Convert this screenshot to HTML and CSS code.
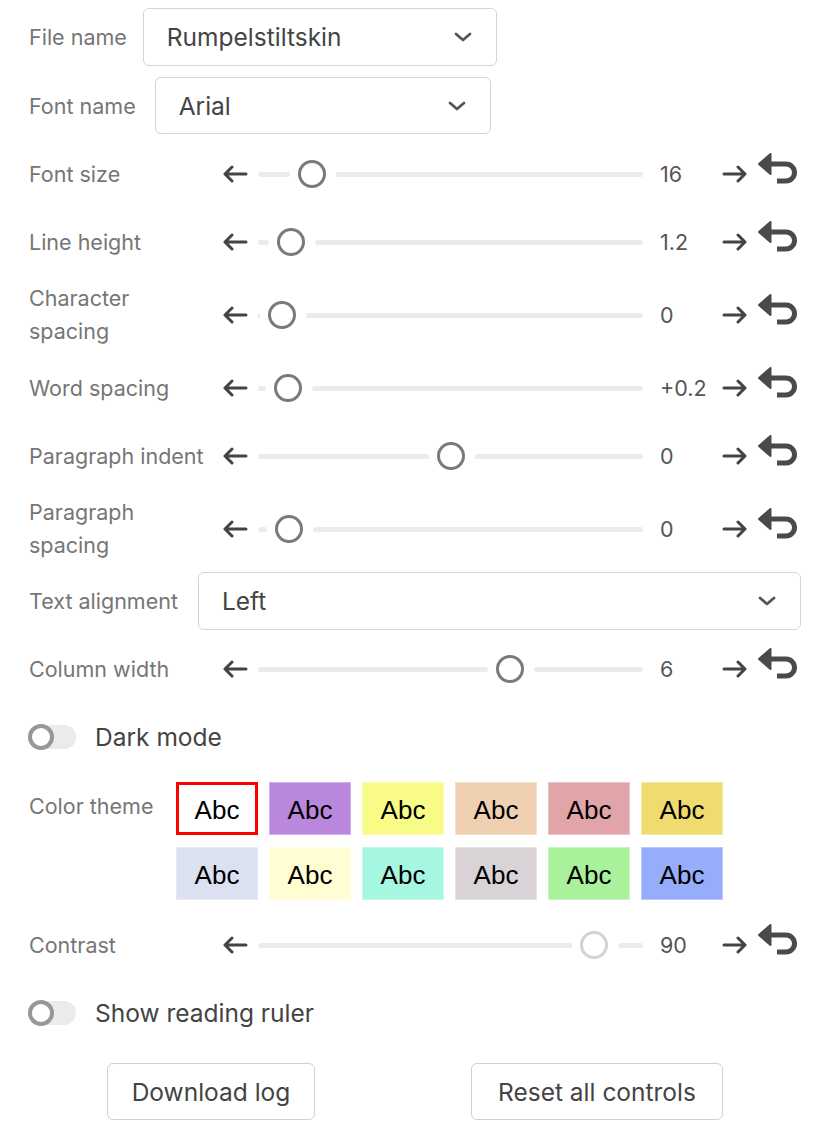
FILE: index.html
```html
<!DOCTYPE html>
<html lang="en">
<head>
<meta charset="utf-8">
<title>Reading settings</title>
<link rel="stylesheet" href="styles.css">
</head>
<body>
<div class="panel">

  <div class="row select-row first">
    <span class="label">File name</span>
    <div class="select select-file"><span class="select-text">Rumpelstiltskin</span>
      <svg class="chev" viewBox="0 0 18 10" width="18" height="10"><path d="M2 2 L9 8 L16 2"/></svg></div>
  </div>

  <div class="row select-row">
    <span class="label">Font name</span>
    <div class="select select-font"><span class="select-text">Arial</span>
      <svg class="chev" viewBox="0 0 18 10" width="18" height="10"><path d="M2 2 L9 8 L16 2"/></svg></div>
  </div>

  <div class="row slider-row">
    <span class="label slabel">Font size</span>
    <svg class="arrow" viewBox="0 0 26 18" width="26" height="18"><path d="M24 9 H3 M10 2 L3 9 L10 16"/></svg>
    <div class="track"><span class="seg" style="width:32px"></span><span class="thumb"></span><span class="seg rest"></span></div>
    <span class="value">16</span>
    <svg class="arrow" viewBox="0 0 26 18" width="26" height="18"><path d="M2 9 H23 M16 2 L23 9 L16 16"/></svg>
    <svg class="reset" viewBox="0 0 40 31" width="40" height="31"><polygon points="1,11 12.5,1 12.5,21"/><path d="M11 11 H28 A8.5 8.5 0 0 1 28 28 H19"/></svg>
  </div>

  <div class="row slider-row">
    <span class="label slabel">Line height</span>
    <svg class="arrow" viewBox="0 0 26 18" width="26" height="18"><path d="M24 9 H3 M10 2 L3 9 L10 16"/></svg>
    <div class="track"><span class="seg" style="width:11px"></span><span class="thumb"></span><span class="seg rest"></span></div>
    <span class="value">1.2</span>
    <svg class="arrow" viewBox="0 0 26 18" width="26" height="18"><path d="M2 9 H23 M16 2 L23 9 L16 16"/></svg>
    <svg class="reset" viewBox="0 0 40 31" width="40" height="31"><polygon points="1,11 12.5,1 12.5,21"/><path d="M11 11 H28 A8.5 8.5 0 0 1 28 28 H19"/></svg>
  </div>

  <div class="row slider-row">
    <span class="label slabel two">Character<br>spacing</span>
    <svg class="arrow" viewBox="0 0 26 18" width="26" height="18"><path d="M24 9 H3 M10 2 L3 9 L10 16"/></svg>
    <div class="track"><span class="seg" style="width:2px"></span><span class="thumb"></span><span class="seg rest"></span></div>
    <span class="value">0</span>
    <svg class="arrow" viewBox="0 0 26 18" width="26" height="18"><path d="M2 9 H23 M16 2 L23 9 L16 16"/></svg>
    <svg class="reset" viewBox="0 0 40 31" width="40" height="31"><polygon points="1,11 12.5,1 12.5,21"/><path d="M11 11 H28 A8.5 8.5 0 0 1 28 28 H19"/></svg>
  </div>

  <div class="row slider-row">
    <span class="label slabel">Word spacing</span>
    <svg class="arrow" viewBox="0 0 26 18" width="26" height="18"><path d="M24 9 H3 M10 2 L3 9 L10 16"/></svg>
    <div class="track"><span class="seg" style="width:8px"></span><span class="thumb"></span><span class="seg rest"></span></div>
    <span class="value">+0.2</span>
    <svg class="arrow" viewBox="0 0 26 18" width="26" height="18"><path d="M2 9 H23 M16 2 L23 9 L16 16"/></svg>
    <svg class="reset" viewBox="0 0 40 31" width="40" height="31"><polygon points="1,11 12.5,1 12.5,21"/><path d="M11 11 H28 A8.5 8.5 0 0 1 28 28 H19"/></svg>
  </div>

  <div class="row slider-row">
    <span class="label slabel">Paragraph indent</span>
    <svg class="arrow" viewBox="0 0 26 18" width="26" height="18"><path d="M24 9 H3 M10 2 L3 9 L10 16"/></svg>
    <div class="track"><span class="seg" style="width:171px"></span><span class="thumb"></span><span class="seg rest"></span></div>
    <span class="value">0</span>
    <svg class="arrow" viewBox="0 0 26 18" width="26" height="18"><path d="M2 9 H23 M16 2 L23 9 L16 16"/></svg>
    <svg class="reset" viewBox="0 0 40 31" width="40" height="31"><polygon points="1,11 12.5,1 12.5,21"/><path d="M11 11 H28 A8.5 8.5 0 0 1 28 28 H19"/></svg>
  </div>

  <div class="row slider-row">
    <span class="label slabel two">Paragraph<br>spacing</span>
    <svg class="arrow" viewBox="0 0 26 18" width="26" height="18"><path d="M24 9 H3 M10 2 L3 9 L10 16"/></svg>
    <div class="track"><span class="seg" style="width:9px"></span><span class="thumb"></span><span class="seg rest"></span></div>
    <span class="value">0</span>
    <svg class="arrow" viewBox="0 0 26 18" width="26" height="18"><path d="M2 9 H23 M16 2 L23 9 L16 16"/></svg>
    <svg class="reset" viewBox="0 0 40 31" width="40" height="31"><polygon points="1,11 12.5,1 12.5,21"/><path d="M11 11 H28 A8.5 8.5 0 0 1 28 28 H19"/></svg>
  </div>

  <div class="row select-row align-row">
    <span class="label">Text alignment</span>
    <div class="select select-align"><span class="select-text">Left</span>
      <svg class="chev" viewBox="0 0 18 10" width="18" height="10"><path d="M2 2 L9 8 L16 2"/></svg></div>
  </div>

  <div class="row slider-row">
    <span class="label slabel">Column width</span>
    <svg class="arrow" viewBox="0 0 26 18" width="26" height="18"><path d="M24 9 H3 M10 2 L3 9 L10 16"/></svg>
    <div class="track"><span class="seg" style="width:230px"></span><span class="thumb"></span><span class="seg rest"></span></div>
    <span class="value">6</span>
    <svg class="arrow" viewBox="0 0 26 18" width="26" height="18"><path d="M2 9 H23 M16 2 L23 9 L16 16"/></svg>
    <svg class="reset" viewBox="0 0 40 31" width="40" height="31"><polygon points="1,11 12.5,1 12.5,21"/><path d="M11 11 H28 A8.5 8.5 0 0 1 28 28 H19"/></svg>
  </div>

  <div class="row toggle-row">
    <span class="toggle"><span class="knob"></span></span>
    <span class="toggle-label">Dark mode</span>
  </div>

  <div class="row theme-row">
    <span class="label theme-label">Color theme</span>
    <div class="swatches">
      <span class="swatch selected" style="background:#ffffff">Abc</span>
      <span class="swatch" style="background:#b987db">Abc</span>
      <span class="swatch" style="background:#f9fb87">Abc</span>
      <span class="swatch" style="background:#efd1b1">Abc</span>
      <span class="swatch" style="background:#e1a5a9">Abc</span>
      <span class="swatch" style="background:#efdb6f">Abc</span>
      <span class="swatch" style="background:#dce1f2">Abc</span>
      <span class="swatch" style="background:#fffdd1">Abc</span>
      <span class="swatch" style="background:#a6f7e1">Abc</span>
      <span class="swatch" style="background:#d9d3d7">Abc</span>
      <span class="swatch" style="background:#a9f29b">Abc</span>
      <span class="swatch" style="background:#95adfb">Abc</span>
    </div>
  </div>

  <div class="row slider-row">
    <span class="label slabel">Contrast</span>
    <svg class="arrow" viewBox="0 0 26 18" width="26" height="18"><path d="M24 9 H3 M10 2 L3 9 L10 16"/></svg>
    <div class="track"><span class="seg" style="width:314px"></span><span class="thumb light"></span><span class="seg rest"></span></div>
    <span class="value">90</span>
    <svg class="arrow" viewBox="0 0 26 18" width="26" height="18"><path d="M2 9 H23 M16 2 L23 9 L16 16"/></svg>
    <svg class="reset" viewBox="0 0 40 31" width="40" height="31"><polygon points="1,11 12.5,1 12.5,21"/><path d="M11 11 H28 A8.5 8.5 0 0 1 28 28 H19"/></svg>
  </div>

  <div class="row toggle-row">
    <span class="toggle"><span class="knob"></span></span>
    <span class="toggle-label">Show reading ruler</span>
  </div>

  <div class="row button-row">
    <button class="btn btn-download" type="button">Download log</button>
    <button class="btn btn-reset" type="button">Reset all controls</button>
  </div>

</div>
</body>
</html>
```

FILE: styles.css
```css
html, body {
  margin: 0;
  padding: 0;
  background: #ffffff;
}

body {
  font-family: "Inter", "Noto Sans", "Liberation Sans", sans-serif;
  color: #444444;
}

.panel {
  width: 772px;
  padding: 8px 0 0 29px;
  display: flex;
  flex-direction: column;
  gap: 12px;
}

.row {
  display: flex;
  align-items: center;
}

.label {
  font-size: 21.5px;
  color: #767676;
  line-height: 28px;
  white-space: nowrap;
}

/* selects */
.select-row .label {
  margin-right: 17px;
}

.select-row.first {
  margin-bottom: -1px;
}

.select-row.first .label {
  margin-right: 16px;
}

.align-row {
  margin-top: -2px;
  margin-bottom: -1px;
}

.align-row .label {
  margin-right: 20px;
}

.select {
  box-sizing: border-box;
  height: 58px;
  border: 1.5px solid #d4d4d4;
  border-radius: 6px;
  display: flex;
  align-items: center;
  justify-content: space-between;
  padding: 0 24px 0 23px;
}

.select-text {
  font-size: 24.5px;
  color: #444444;
}

.select-file { width: 354px; }
.select-font { width: 336px; height: 57px; margin-left: 2px; }
.select-align { flex: 1; }

.chev path {
  fill: none;
  stroke: #555555;
  stroke-width: 2.8;
  stroke-linecap: round;
  stroke-linejoin: round;
}

/* sliders */
.slider-row {
  min-height: 56px;
}

.slabel {
  width: 193px;
  flex: none;
}

.slabel.two {
  line-height: 33px;
}

.arrow {
  flex: none;
}

.arrow path {
  fill: none;
  stroke: #444444;
  stroke-width: 3;
  stroke-linecap: round;
  stroke-linejoin: round;
}

.track {
  flex: 1;
  display: flex;
  align-items: center;
  margin: 0 17px 0 10px;
}

.seg {
  flex: none;
  height: 5px;
  border-radius: 3px;
  background: #ebebeb;
}

.seg.rest {
  flex: 1;
}

.thumb {
  flex: none;
  box-sizing: border-box;
  width: 28px;
  height: 28px;
  border-radius: 50%;
  border: 3px solid #7a7a7a;
  background: #ffffff;
  margin: 0 10px 0 8px;
}

.thumb.light {
  border-color: #d3d3d3;
}

.value {
  width: 62px;
  flex: none;
  font-size: 21.5px;
  color: #555555;
}

.reset {
  flex: none;
  margin: 0 3px 12px 10px;
}

.reset polygon {
  fill: #4a4a4a;
  stroke: #4a4a4a;
  stroke-width: 2;
  stroke-linejoin: round;
}

.reset path {
  fill: none;
  stroke: #4a4a4a;
  stroke-width: 5;
}

/* toggles */
.toggle-row {
  min-height: 56px;
}

.toggle {
  flex: none;
  width: 48px;
  height: 24px;
  border-radius: 12px;
  background: #ebebeb;
  margin-left: -1px;
  display: flex;
  align-items: center;
}

.knob {
  box-sizing: border-box;
  width: 26px;
  height: 26px;
  border-radius: 50%;
  border: 4px solid #979797;
  background: #ffffff;
}

.toggle-label {
  font-size: 24.5px;
  color: #444444;
  margin-left: 19px;
}

/* color theme */
.theme-row {
  align-items: flex-start;
  padding: 5px 0;
}

.theme-label {
  width: 147px;
  flex: none;
  line-height: 48px;
}

.swatches {
  display: grid;
  grid-template-columns: repeat(6, 82px);
  grid-auto-rows: 53px;
  column-gap: 11px;
  row-gap: 12px;
}

.swatch {
  box-sizing: border-box;
  display: flex;
  align-items: center;
  justify-content: center;
  padding-top: 4px;
  font-family: "Liberation Sans", Arial, sans-serif;
  font-size: 26px;
  color: #000000;
  border: 1px solid rgba(255, 255, 255, 0.35);
}

.swatch.selected {
  border: 3px solid #ff0000;
}

/* buttons */
.button-row {
  justify-content: space-around;
  margin-top: 10px;
}

.btn {
  box-sizing: border-box;
  height: 57px;
  border: 1.5px solid #d0d0d0;
  border-radius: 6px;
  background: #ffffff;
  font-family: "Inter", "Noto Sans", "Liberation Sans", sans-serif;
  font-size: 24.5px;
  color: #444444;
  padding: 0;
}

.btn-download { width: 208px; }
.btn-reset { width: 252px; }
```
